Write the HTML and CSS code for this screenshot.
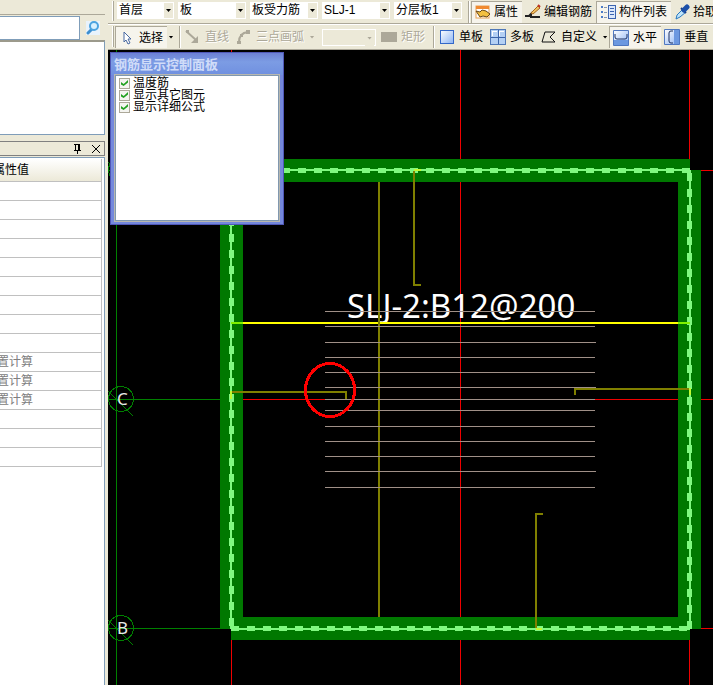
FILE: index.html
```html
<!DOCTYPE html>
<html lang="zh-CN">
<head>
    <meta charset="UTF-8">
    <meta name="viewport" content="width=device-width, initial-scale=1.0">
    <title>板受力筋</title>
    <link rel="stylesheet" href="styles.css">
</head>
<body>
    <aside class="sidebar">
        <form class="search">
            <input type="text" class="search-input" aria-label="搜索构件">
            <button type="button" class="search-btn" aria-label="搜索">
                <svg width="14" height="14" viewBox="0 0 14 14">
                    <rect width="14" height="14" fill="#e9f3fc"/>
                    <path d="M6 8 L2 12" stroke="#3d8fd0" stroke-width="3" stroke-linecap="round"/>
                    <circle cx="8" cy="5" r="4" fill="#d8f0ff" stroke="#4ba3e0" stroke-width="2"/>
                </svg>
            </button>
        </form>
        <div class="component-list"></div>
        <div class="panel-title">
            <button type="button" aria-label="固定">
                <svg width="9" height="10" viewBox="0 0 9 10" shape-rendering="crispEdges">
                    <path d="M1 0h6v6h1v1H5v3H4V7H1V6h1V1H1zM3 1v5h2V1z" fill="#000" fill-rule="evenodd"/>
                </svg>
            </button>
            <button type="button" aria-label="关闭">
                <svg width="8" height="8" viewBox="0 0 8 8"><path d="M0 0L8 8M8 0L0 8" stroke="#000"/></svg>
            </button>
        </div>
        <div class="props">
            <table class="props-table">
                <thead><tr><th>属性值</th></tr></thead>
                <tbody>
                    <tr><td></td></tr>
                    <tr><td></td></tr>
                    <tr><td></td></tr>
                    <tr><td></td></tr>
                    <tr><td></td></tr>
                    <tr><td></td></tr>
                    <tr><td></td></tr>
                    <tr><td></td></tr>
                    <tr><td></td></tr>
                    <tr><td>置计算</td></tr>
                    <tr><td>置计算</td></tr>
                    <tr><td>置计算</td></tr>
                    <tr><td></td></tr>
                    <tr><td></td></tr>
                    <tr><td></td></tr>
                </tbody>
            </table>
        </div>
    </aside>

    <main class="workspace">
        <div class="toolbar toolbar-top">
            <span class="grip"></span>
            <span class="combo combo-floor"><select aria-label="楼层"><option>首层</option></select></span>
            <span class="combo"><select aria-label="构件类别"><option>板</option></select></span>
            <span class="combo"><select aria-label="构件类型"><option>板受力筋</option></select></span>
            <span class="combo"><select aria-label="构件名称"><option>SLJ-1</option></select></span>
            <span class="combo"><select aria-label="分层"><option>分层板1</option></select></span>
            <span class="sep"></span>
            <button type="button" class="tool pressed">
                <svg width="16" height="16" viewBox="0 0 16 16">
                    <rect x="1" y="2" width="13" height="12" fill="#fff" stroke="#e8a050"/>
                    <rect x="1" y="2" width="13" height="3" fill="#f08a30"/>
                    <path d="M1 7l4 1 2-2 4 1 4 3-3 3-4-1-3 1z" fill="#f4c040" stroke="#6b4a18"/>
                </svg>
                属性
            </button>
            <button type="button" class="tool">
                <svg width="16" height="16" viewBox="0 0 16 16">
                    <path d="M0 12h4l2-2v3h9" fill="none" stroke="#222" stroke-width="2"/>
                    <path d="M6 9l7-7 2 2-7 6z" fill="#f0c060" stroke="#a86820"/>
                    <path d="M13 1l2 2" stroke="#c03020" stroke-width="2"/>
                </svg>
                编辑钢筋
            </button>
            <button type="button" class="tool pressed">
                <svg width="16" height="16" viewBox="0 0 16 16" shape-rendering="crispEdges">
                    <path d="M1 2h2v2H1zM1 7h2v2H1zM1 12h2v2H1z" fill="#4a7cc8"/>
                    <path d="M4 3h3M4 8h3M4 13h3" stroke="#8898b0"/>
                    <rect x="8" y="1" width="7" height="13" fill="#dce8fa" stroke="#3c64b0"/>
                    <path d="M10 4h4M10 7h4M10 10h4" stroke="#3c64b0"/>
                </svg>
                构件列表
            </button>
            <button type="button" class="tool">
                <svg width="16" height="16" viewBox="0 0 16 16">
                    <path d="M2 15l1-4 6-6 3 3-6 5z" fill="#bfe4fa" stroke="#2878c0"/>
                    <path d="M7 4l5 5" stroke="#183c88" stroke-width="2"/>
                    <path d="M10 6l3-3" stroke="#1c50a8" stroke-width="5" stroke-linecap="round"/>
                </svg>
                拾取构件
            </button>
        </div>

        <div class="toolbar toolbar-draw">
            <span class="grip"></span>
            <button type="button" class="tool pressed select-tool">
                <svg width="16" height="16" viewBox="0 0 16 16">
                    <path d="M5 2v10l2-2 2 4 2-1-2-4h3z" fill="#fff" stroke="#4868a0"/>
                </svg>
                选择
            </button>
            <button type="button" class="drop" aria-label="选择方式"></button>
            <span class="sep"></span>
            <button type="button" class="tool" disabled>
                <svg width="16" height="16" viewBox="0 0 16 16">
                    <path d="M1 2l10 9" stroke="#aca899" stroke-width="2"/>
                    <path d="M13 7v7H6z" fill="#aca899"/><path d="M1 1h3v3H1z" fill="#aca899"/>
                </svg>
                直线
            </button>
            <button type="button" class="tool" disabled>
                <svg width="16" height="16" viewBox="0 0 16 16">
                    <path d="M3 13Q3 4 12 3" fill="none" stroke="#aca899" stroke-width="2"/>
                    <path d="M1 12h4v3H1zM4 5h3v3H4zM10 1h4v4h-4z" fill="#aca899"/>
                </svg>
                三点画弧
            </button>
            <button type="button" class="drop" aria-label="画弧方式" disabled></button>
            <span class="combo combo-off"><select aria-label="画弧参数" disabled><option></option></select></span>
            <button type="button" class="tool" disabled>
                <svg width="16" height="16" viewBox="0 0 16 16"><path d="M0 3h16v10H0z" fill="#aca899"/></svg>
                矩形
            </button>
            <span class="sep"></span>
            <button type="button" class="tool">
                <svg width="16" height="16" viewBox="0 0 16 16" shape-rendering="crispEdges">
                    <defs>
                        <linearGradient id="pane" x1="0" y1="0" x2="1" y2="1">
                            <stop offset="0" stop-color="#fff"/><stop offset="1" stop-color="#8cb4f4"/>
                        </linearGradient>
                    </defs>
                    <path d="M1.5 1.5h13v13h-13z" fill="url(#pane)" stroke="#3468c8"/>
                </svg>
                单板
            </button>
            <button type="button" class="tool">
                <svg width="16" height="16" viewBox="0 0 16 16" shape-rendering="crispEdges">
                    <path d="M.5.5h15v15H.5z" fill="#b4d0f4" stroke="#5078b8"/>
                    <path d="M8 1v14M1 8h14" stroke="#3c64a8"/>
                    <path d="M2 7V2h5M9 7V2h5" fill="none" stroke="#fff"/>
                </svg>
                多板
            </button>
            <button type="button" class="tool">
                <svg width="16" height="16" viewBox="0 0 16 16">
                    <path d="M4 3h10L9 8l5 5H1z" fill="none" stroke="#111"/>
                </svg>
                自定义
            </button>
            <button type="button" class="drop" aria-label="自定义方式"></button>
            <button type="button" class="tool pressed">
                <svg width="16" height="16" viewBox="0 0 16 16">
                    <path d="M.5.5h15v15H.5z" fill="url(#pane)" stroke="#5078c0"/>
                    <path d="M1 10h14v5H1z" fill="#6c98e0"/>
                    <path d="M2 4v3q0 2 2 2h8q2 0 2-2V4" fill="none" stroke="#1c3060"/>
                </svg>
                水平
            </button>
            <button type="button" class="tool">
                <svg width="16" height="16" viewBox="0 0 16 16">
                    <path d="M.5.5h15v15H.5z" fill="url(#pane)" stroke="#5078c0"/>
                    <path d="M10 1h5v14h-5z" fill="#6c98e0"/>
                    <path d="M9 2H7Q5 2 5 4v8q0 2 2 2h2" fill="none" stroke="#1c3060"/>
                </svg>
                垂直
            </button>
        </div>

        <div class="canvas">
            <svg class="drawing" viewBox="108 50 605 635" preserveAspectRatio="xMinYMin slice" shape-rendering="crispEdges">
                <rect x="108" y="50" width="605" height="635" fill="#000"/>

                <!-- axis grid -->
                <g stroke="#f00000">
                    <path d="M231.5 50V685M460.5 50V685M689.5 50V685"/>
                    <path d="M231 170.5H713M231 399.5H713M231 628.5H713"/>
                </g>
                <g stroke="#008000" fill="none">
                    <path d="M116.5 50V685M108 170.5H231M108 399.5H231M108 628.5H231"/>
                    <path d="M108 162l25 25M108 391l25 25M108 620l25 25"/>
                    <circle cx="121" cy="170" r="12.5"/>
                    <circle cx="121" cy="399" r="12.5"/>
                    <circle cx="121" cy="628" r="12.5"/>
                </g>
                <text class="axis-name" x="117" y="405">C</text>
                <text class="axis-name" x="117" y="634">B</text>

                <text class="rebar-name" x="347" y="318">SLJ-2:B12@200</text>

                <!-- walls -->
                <path d="M231 159h459v23H231zM220 170h23v459h-23zM678 170h23v459h-23zM231 617h459v23H231z" fill="#007800"/>
                <g stroke="#80f880" fill="none">
                    <path d="M231 170H690M231 170V629M690 170V629M231 629H690" stroke-width="2"/>
                    <g stroke-width="5" stroke-dasharray="8 8">
                        <path d="M234 170.5H690"/>
                        <path d="M231.5 170V629"/>
                        <path d="M689.5 173V629"/>
                        <path d="M231 628.5H690"/>
                    </g>
                </g>

                <!-- slab rebar -->
                <path d="M243 323H678" stroke="#ffff00" stroke-width="2"/>
                <path d="M231 323h12M678 323h12" stroke="#80f000" stroke-width="2"/>
                <g stroke="#808000" stroke-width="2" fill="none">
                    <path d="M379 182V617"/>
                    <path d="M414 171V285H421"/>
                    <path d="M231 392H346V399"/>
                    <path d="M690 389H575V395"/>
                    <path d="M536 628V514H543"/>
                </g>
                <path d="M414 170h7M231 391v8M690 388v7M536 629h6" stroke="#c0f830" stroke-width="2"/>

                <!-- distribution lines -->
                <path d="M325 311.5h270M325 326.5h270M325 342.5h271M325 357.5h270M325 372.5h270M325 387.5h271M325 399.5h270M325 410.5h270M325 426.5h270M325 441.5h270M325 456.5h270M325 471.5h271M325 487.5h270" stroke="#a09088"/>
                <ellipse cx="330" cy="390" rx="24.5" ry="26.5" fill="none" stroke="#f00" stroke-width="3"/>
            </svg>

            <section class="palette">
                <h2 class="palette-title">钢筋显示控制面板</h2>
                <div class="palette-body">
                    <label><input type="checkbox" checked>温度筋</label>
                    <label><input type="checkbox" checked>显示其它图元</label>
                    <label><input type="checkbox" checked>显示详细公式</label>
                </div>
            </section>
        </div>
    </main>
</body>
</html>
```
FILE: styles.css
```css
* {
    box-sizing: border-box;
}
body {
    margin: 0;
    height: 100vh;
    display: flex;
    overflow: hidden;
    background: #ece9d8;
    color: #000;
    font: 12px/16px "Liberation Sans", "Noto Sans CJK SC", sans-serif;
}
button, input, select {
    font: inherit;
    color: inherit;
    margin: 0;
}
button {
    padding: 0;
    border: none;
    background: none;
}

/* left side */
.sidebar {
    flex: 0 0 105px;
    display: flex;
    flex-direction: column;
    overflow: hidden;
}
.search {
    display: flex;
    margin-top: 14px;
    border-top: 1px solid #aca899;
    padding-top: 1px;
}
.search-input {
    flex: 1;
    min-width: 0;
    height: 24px;
    border: 1px solid #7f9db9;
    border-left: none;
    background: #fff;
}
.search-btn {
    width: 25px;
    display: flex;
    align-items: center;
    justify-content: center;
}
.component-list {
    height: 95px;
    background: #fff;
    border: 1px solid #7f9db9;
    border-top: 2px solid #9c9a8c;
    border-left: none;
}
.panel-title {
    display: flex;
    align-items: center;
    justify-content: flex-end;
    gap: 10px;
    height: 15px;
    margin: 6px 0 1px;
    padding-right: 4px;
    border: 1px solid #808080;
    border-left: none;
}
.panel-title button {
    display: flex;
}
.props {
    flex: 1;
    background: #fff;
    border: 1px solid #7f9db9;
    border-width: 1px 1px 0 0;
    padding: 1px 2px 0 0;
    overflow: hidden;
}
/* scrolled sideways, the name column is out of view */
.props-table {
    width: calc(100% + 7px);
    margin-left: -7px;
    border-collapse: separate;
    border-spacing: 0;
}
.props-table th {
    height: 23px;
    padding: 0;
    text-align: left;
    font-weight: normal;
    background: linear-gradient(#fff, #ece9d8);
}
.props-table td {
    height: 19px;
    padding: 0 0 0 4px;
    color: #808080;
}
.props-table th, .props-table td {
    border-right: 1px solid #c0c0c0;
    border-bottom: 1px solid #c0c0c0;
}

/* toolbars */
.workspace {
    flex: 1;
    min-width: 0;
    display: flex;
    flex-direction: column;
    margin-left: 3px;
}
.toolbar {
    display: flex;
    align-items: center;
    overflow: hidden;
    white-space: nowrap;
    padding-left: 4px;
}
.toolbar-top {
    height: 24px;
    border-bottom: 1px solid #aca899;
}
.toolbar-draw {
    height: 26px;
    border-top: 1px solid #fff;
    border-bottom: 1px solid #aca899;
}
.toolbar > * {
    flex: none;
}
.grip {
    width: 2px;
    align-self: stretch;
    margin: 1px 1px 2px 0;
    background: #fff;
    border-right: 1px solid #aca899;
}
.sep {
    width: 2px;
    height: 22px;
    margin: 0 1px 0 4px;
    border-left: 1px solid #aca899;
    border-right: 1px solid #fff;
}
.combo {
    position: relative;
    width: 68px;
    height: 17px;
    margin: 0 2px;
    background: #fff;
}
.toolbar-top .combo {
    align-self: flex-start;
    margin-top: 2px;
}
.combo-floor {
    width: 57px;
}
.combo select {
    appearance: none;
    display: block;
    width: 100%;
    height: 16px;
    padding: 0 12px 0 2px;
    border: none;
    background: none;
    line-height: 14px;
}
.combo::after {
    content: "";
    position: absolute;
    top: 1px;
    right: 1px;
    width: 9px;
    height: 15px;
    pointer-events: none;
    background: #ece9d8;
}
.combo::before, .drop::before {
    content: "";
    width: 5px;
    height: 3px;
    background: #000;
    clip-path: polygon(0 0, 100% 0, 50% 100%);
}
.combo::before {
    position: absolute;
    z-index: 1;
    top: 7px;
    right: 3px;
    pointer-events: none;
}
.combo-off {
    width: 54px;
    margin: 0 2px 0 6px;
    background: #ece9d8;
    border: 1px solid #fff;
}
.combo-off::before, .drop:disabled::before {
    background: #aca899;
}
.drop {
    width: 8px;
    height: 22px;
    display: flex;
    align-items: center;
    justify-content: center;
}
.tool {
    display: flex;
    align-items: center;
    gap: 3px;
    height: 22px;
    padding: 0 4px 0 3px;
}
.toolbar-draw .tool {
    gap: 4px;
}
.tool:disabled {
    color: #aca899;
    text-shadow: 1px 1px #fff;
}
.pressed {
    background: #f6f4ec;
    border-left: 1px solid #aca899;
    border-top: 1px solid #aca899;
}

/* drawing area */
.canvas {
    flex: 1;
    min-height: 0;
    position: relative;
    background: #000;
}
.drawing {
    display: block;
    width: 100%;
    height: 100%;
}
.axis-name {
    font: 17px "Noto Sans", sans-serif;
    fill: #e8e8e8;
}
.rebar-name {
    font: 33px "Noto Sans", sans-serif;
    fill: #fff;
}

/* floating palette */
.palette {
    position: absolute;
    left: 2px;
    top: 2px;
    width: 174px;
    height: 173px;
    display: flex;
    flex-direction: column;
    padding: 0 4px 3px;
    background: #7488dc;
    border: 1px solid #5058b8;
}
.palette-title {
    margin: 0 -4px;
    padding: 3px 3px 2px;
    font-size: 13px;
    line-height: 17px;
    color: #d0dcf8;
    background: linear-gradient(#6c80d4, #7c9ce4 40%, #7090e0);
}
.palette-body {
    flex: 1;
    background: #fff;
    border: 1px solid #8098b0;
    box-shadow: 0 0 0 1px #b8b8b0;
    padding: 1px 3px;
}
.palette-body label {
    display: flex;
    align-items: center;
    gap: 3px;
    height: 12px;
    line-height: 12px;
}
.palette-body input {
    appearance: none;
    width: 11px;
    height: 11px;
    border: 1px solid #aca899;
    background: #f4f4f0;
    display: flex;
    align-items: center;
    justify-content: center;
}
.palette-body input:checked::before {
    content: "";
    width: 7px;
    height: 6px;
    background: #21a121;
    clip-path: polygon(0 35%, 38% 65%, 100% 0, 100% 40%, 38% 100%, 0 75%);
}
```
